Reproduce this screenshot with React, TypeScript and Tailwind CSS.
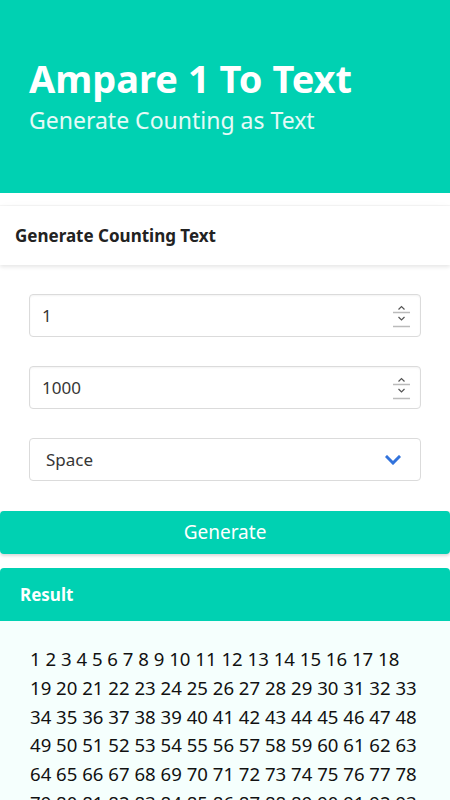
import { useState } from "react"

const numbers = Array.from({ length: 1000 }, (_, i) => i + 1).join(" ")

function Spinner() {
  return (
    <svg className="pointer-events-none absolute right-[11px] top-1/2 h-[26px] w-[17px] -translate-y-1/2" viewBox="0 0 17 26" fill="none">
      <path d="M5.5 6.5l3-3 3 3" stroke="#555" strokeWidth="1.2" />
      <path d="M0 9.5h17" stroke="#bbb" strokeWidth="1.5" />
      <path d="M5.5 14l3 3 3-3" stroke="#555" strokeWidth="1.2" />
      <path d="M0 23.5h17" stroke="#bbb" strokeWidth="1.5" />
    </svg>
  )
}

export default function App() {
  const [from, setFrom] = useState("1")
  const [to, setTo] = useState("1000")
  const [sep, setSep] = useState("space")

  const inputCls =
    "h-[43px] w-full rounded-[4px] border border-[#dbdbdb] px-[12px] text-[17px] text-[#363636] shadow-[inset_0_0.0625em_0.125em_rgba(10,10,10,0.05)] outline-none [appearance:textfield] [&::-webkit-inner-spin-button]:appearance-none [&::-webkit-outer-spin-button]:appearance-none"

  return (
    <div className="min-h-screen bg-white font-['Noto_Sans',sans-serif] text-[#0a0a0a]">
      {/* Hero */}
      <section className="h-[193px] bg-[#00d1b2] px-[29px] pt-[57px]">
        <h1 className="text-[38px] font-bold leading-[1.15] text-white">Ampare 1 To Text</h1>
        <p className="mt-[5px] text-[23px] leading-[1.25] text-white/90">Generate Counting as Text</p>
      </section>

      {/* Card */}
      <div className="mt-[13px] shadow-[0_0.5em_1em_-0.125em_rgba(10,10,10,0.1),0_0_0_1px_rgba(10,10,10,0.03)]">
        <div className="flex h-[59px] items-center px-[15px] shadow-[0_0.125em_0.25em_rgba(10,10,10,0.1)]">
          <p className="text-[17px] font-bold text-[#222]">Generate Counting Text</p>
        </div>
        <div className="flex flex-col gap-[29px] px-[29px] pb-[30px] pt-[29px]">
          <div className="relative">
            <input type="number" value={from} onChange={(e) => setFrom(e.target.value)} className={inputCls} />
            <Spinner />
          </div>
          <div className="relative">
            <input type="number" value={to} onChange={(e) => setTo(e.target.value)} className={inputCls} />
            <Spinner />
          </div>
          <div className="relative">
            <select
              value={sep}
              onChange={(e) => setSep(e.target.value)}
              className="h-[43px] w-full appearance-none rounded-[4px] border border-[#dbdbdb] bg-white pl-[16px] text-[17px] text-[#363636] outline-none"
            >
              <option value="space">Space</option>
              <option value="comma">Comma</option>
              <option value="newline">New Line</option>
            </select>
            <svg className="pointer-events-none absolute right-[20px] top-1/2 h-[10px] w-[16px] -translate-y-1/2" viewBox="0 0 16 10" fill="none">
              <path d="M2 2l6 6 6-6" stroke="#3273dc" strokeWidth="3" strokeLinecap="square" />
            </svg>
          </div>
        </div>
      </div>

      {/* Button */}
      <button className="h-[43px] w-full rounded-[4px] bg-[#00d1b2] text-[19px] font-normal text-white shadow-[0_2px_3px_rgba(10,10,10,0.15)]">
        Generate
      </button>

      {/* Result */}
      <div className="mt-[14px] overflow-hidden rounded-t-[4px]">
        <div className="flex h-[53px] items-center bg-[#00d1b2] px-[20px]">
          <p className="text-[17px] font-bold text-white">Result</p>
        </div>
        <div className="bg-[#f5fffd] px-[30px] pb-[30px] pt-[24px]">
          <p className="break-words text-[18.6px] leading-[1.55] text-[#111]">{numbers}</p>
        </div>
      </div>
    </div>
  )
}
